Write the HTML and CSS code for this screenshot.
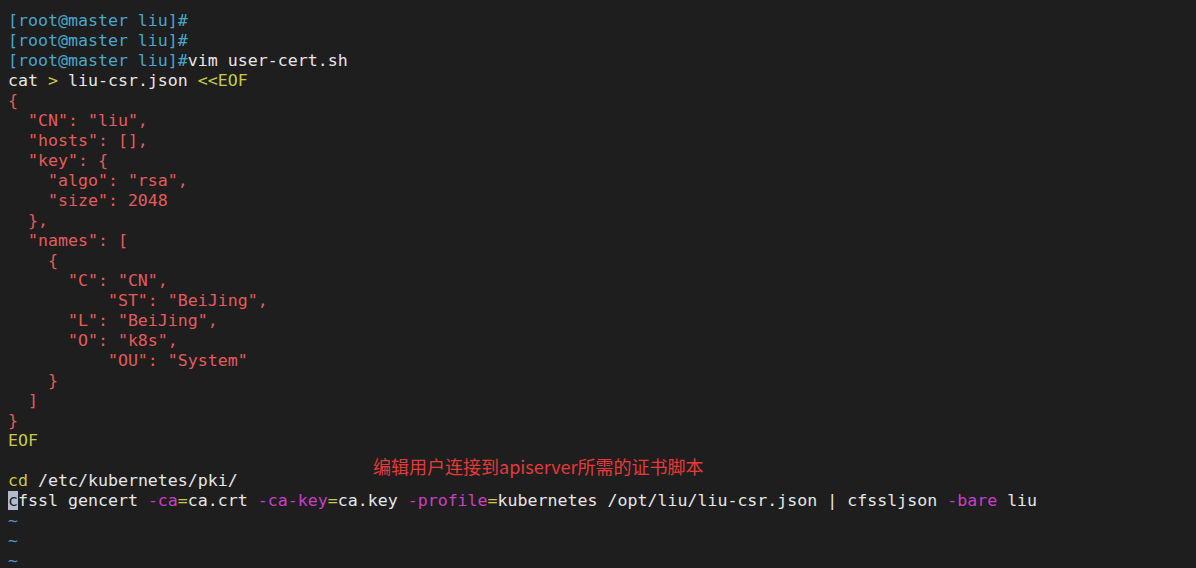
FILE: index.html
```html
<!DOCTYPE html>
<html lang="en">
<head>
    <meta charset="UTF-8">
    <title>vim user-cert.sh</title>
    <link rel="stylesheet" href="styles.css">
</head>
<body>
    <div class="terminal">
<pre class="screen"><span class="prompt">[root@master liu]#</span>
<span class="prompt">[root@master liu]#</span>
<span class="prompt">[root@master liu]#</span>vim user-cert.sh
cat <span class="yel">&gt;</span> liu-csr.json <span class="yel">&lt;&lt;EOF</span>
<span class="red">{
  "CN": "liu",
  "hosts": [],
  "key": {
    "algo": "rsa",
    "size": 2048
  },
  "names": [
    {
      "C": "CN",
          "ST": "BeiJing",
      "L": "BeiJing",
      "O": "k8s",
          "OU": "System"
    }
  ]
}</span>
<span class="yel">EOF</span>

<span class="yel">cd</span> /etc/kubernetes/pki/
<span class="cursor">c</span>fssl gencert <span class="mag">-ca</span><span class="yel">=</span>ca.crt <span class="mag">-ca-key</span><span class="yel">=</span>ca.key <span class="mag">-profile</span><span class="yel">=</span>kubernetes /opt/liu/liu-csr.json | cfssljson <span class="mag">-bare</span> liu
<span class="tilde">~</span>
<span class="tilde">~</span>
<span class="tilde">~</span></pre>
        <div class="note">编辑用户连接到apiserver所需的证书脚本</div>
    </div>
</body>
</html>
```
FILE: styles.css
```css
html, body {
    margin: 0;
    padding: 0;
    height: 100%;
    background-color: #1e1e1e;
    overflow: hidden;
}

.terminal {
    position: relative;
    padding: 11px 8px 0;
}

.screen {
    margin: 0;
    font-family: "DejaVu Sans Mono", monospace;
    font-size: 16.6px;
    line-height: 20px;
    color: #e6e6e6;
    white-space: pre;
}

.prompt {
    color: #4aa6c8;
}

.red {
    color: #e25c5c;
}

.yel {
    color: #c9c947;
}

.mag {
    color: #c83ec8;
}

.tilde {
    color: #4a9ac8;
}

.cursor {
    background-color: #b4bccb;
    color: #1e1e1e;
}

.note {
    position: absolute;
    left: 373px;
    top: 453px;
    font-family: "Noto Sans CJK SC", sans-serif;
    font-size: 18px;
    line-height: 26px;
    color: #e43a3a;
}
```
